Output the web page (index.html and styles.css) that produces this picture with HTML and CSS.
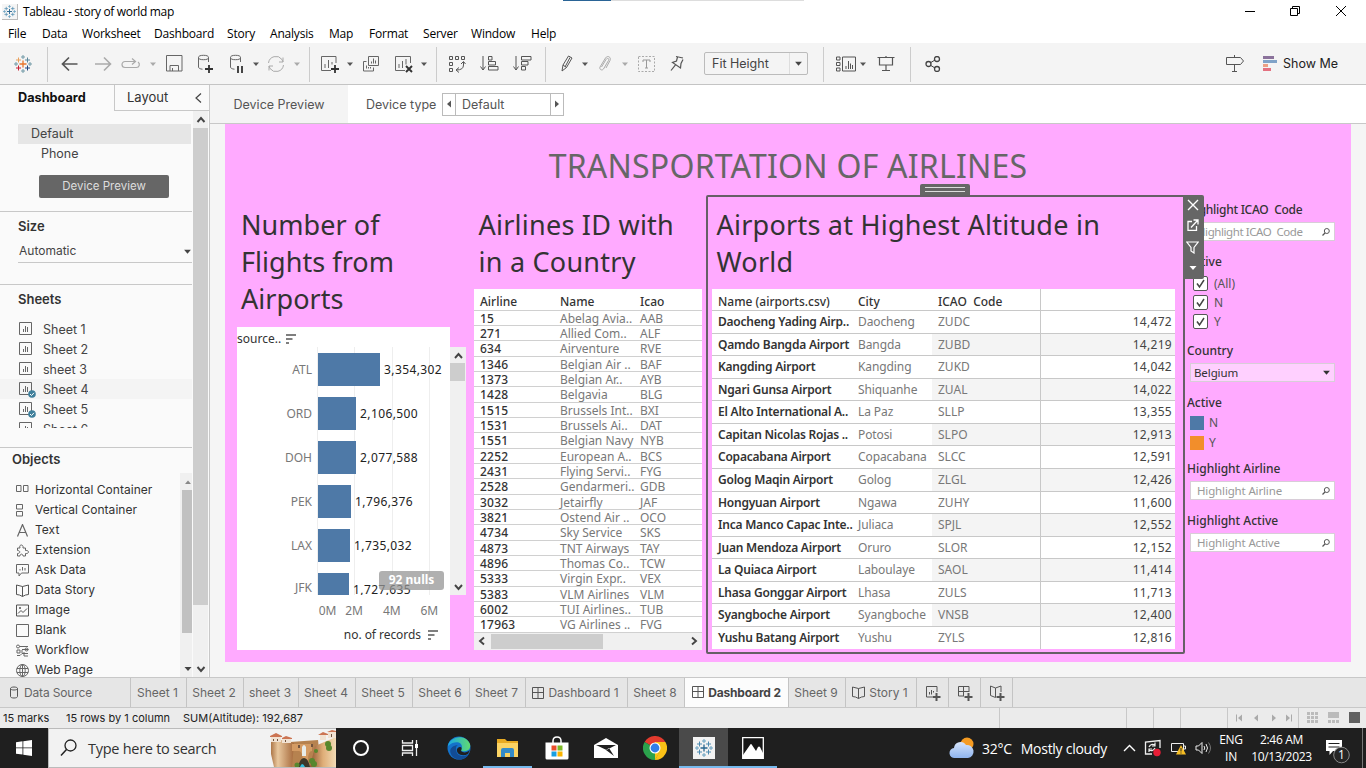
FILE: index.html
```html
<!DOCTYPE html>
<html lang="en">
<head>
<meta charset="utf-8">
<title>Tableau - story of world map</title>
<link rel="stylesheet" href="styles.css">
</head>
<body>
<svg class="defs" width="0" height="0">
  <defs>
    <symbol id="caret" viewBox="0 0 8 8"><path d="M1 2.500h6L4 6z" fill="currentColor"/></symbol>
    <symbol id="chev-up" viewBox="0 0 10 10"><path d="M1.500 7 5 3l3.500 4" fill="none" stroke="currentColor" stroke-width="1.900"/></symbol>
    <symbol id="chev-down" viewBox="0 0 10 10"><path d="M1.500 3 5 7l3.500-4" fill="none" stroke="currentColor" stroke-width="1.900"/></symbol>
    <symbol id="sort" viewBox="0 0 12 12"><path d="M1 2h10M1 6h6.500M1 10h3" stroke="#555" stroke-width="1.700" fill="none"/></symbol>
    <symbol id="sheet" viewBox="0 0 14 14"><path d="M.5.500h12v12H.500zM4.500 10V7M6.500 10V4M8.500 10V5" fill="none" stroke="#666"/></symbol>
    <symbol id="check-badge" viewBox="0 0 8 8"><circle cx="4" cy="4" r="3.800" fill="#3f7f9b"/><path d="m2 4 1.500 1.500L6 2.800" fill="none" stroke="#fff"/></symbol>
    <symbol id="dash" viewBox="0 0 12 12"><path d="M.5.500h11v11H.500zM6 .500v11M.5 5.500h11" fill="none" stroke="#555"/></symbol>
    <symbol id="book" viewBox="0 0 13 13"><path d="M6.500 2.500 .5 1v9.500l3 .5 3 1.500 3-1.500 3-.5V1zM6.500 2.500v10" fill="none" stroke="#555"/></symbol>
    <symbol id="mag" viewBox="0 0 10 10"><circle cx="5.800" cy="4" r="2.500" fill="none" stroke="#555"/><path d="M4 6 1.500 8.500" stroke="#555" stroke-width="1.200"/></symbol>
    <symbol id="dbicon" viewBox="0 0 14 18"><ellipse cx="6.500" cy="3.500" rx="5" ry="2.200" fill="none" stroke="#666"/><path d="M1.500 3.500V13c0 1.200 1.500 2 4 2.200M11.500 3.500V8" fill="none" stroke="#666"/></symbol>
    <symbol id="tabmark" viewBox="0 0 18 18"><path fill="none" stroke-width="1.300" stroke="var(--c1)" d="M9 5.500v7M5.500 9h7"/><path fill="none" stroke="var(--c2)" d="M4.500 2.500v5M2 5h5"/><path fill="none" stroke="var(--c3)" d="M13.500 2.500v5M11 5h5"/><path fill="none" stroke="var(--c4)" d="M4.500 10.500v5M2 13h5"/><path fill="none" stroke="var(--c5)" d="M13.500 10.500v5M11 13h5"/><path fill="none" stroke="var(--c6)" d="M9 0v4M7 2h4M9 14v4M7 16h4M2 7v4M0 9h4M16 7v4M14 9h4"/></symbol>
  </defs>
</svg>

<header class="titlebar">
  <svg class="app-icon mono" width="16" height="16"><use href="#tabmark"/></svg>
  <span class="app-title">Tableau - story of world map</span>
  <div class="progress"><i></i></div>
  <svg class="win-min" width="12" height="12"><path d="M1 6.500h10" stroke="#000"/></svg>
  <svg class="win-max" width="12" height="12"><path d="M1.500 3.500h7v7h-7zM3.500 3.500v-2h7v7h-2" fill="none" stroke="#000"/></svg>
  <svg class="win-close" width="12" height="12"><path d="m1 1 10 10M11 1 1 11" stroke="#000"/></svg>
</header>

<nav class="menubar">
  <span style="width:34px">File</span><span style="width:40px">Data</span><span style="width:72px">Worksheet</span><span style="width:73px">Dashboard</span><span style="width:43px">Story</span><span style="width:59px">Analysis</span><span style="width:40px">Map</span><span style="width:54px">Format</span><span style="width:48px">Server</span><span style="width:60px">Window</span><span>Help</span>
</nav>

<div class="toolbar">
  <div class="t w46"><svg class="colour" width="18" height="18"><use href="#tabmark"/></svg></div>
  <div class="sep w2"></div>
  <div class="t w42 right"><svg width="18" height="16"><path d="M16.500 8H2M8 1.500 1.500 8 8 14.500" fill="none" stroke="#555" stroke-width="1.700"/></svg></div>
  <div class="t w26"><svg width="18" height="16"><path d="M1 8h15M10 1.500 16.500 8 10 14.500" fill="none" stroke="#aaa" stroke-width="1.600"/></svg></div>
  <div class="t w30"><svg width="20" height="14"><path d="M9 4.500H4a3 3 0 0 0 0 6h11.500a3 3 0 0 0 1.500-5.500M8 4.500h6M11 1.500l3.500 3L11 7.500" fill="none" stroke="#aaa" stroke-width="1.200"/></svg></div>
  <div class="t w14 dim"><svg width="8" height="8"><use href="#caret"/></svg></div>
  <div class="t w28"><svg width="17" height="17"><path d="M.5.500h15.500v15.500H.500zM4 16v-5.500h8.500V16M6.500 16v-3" fill="none" stroke="#666"/></svg></div>
  <div class="t w35"><svg width="16" height="20"><g transform="translate(-1 0)"><use href="#dbicon" width="14" height="18"/></g><path d="M11 11v8M7 15h8" stroke="#333" stroke-width="1.800"/></svg></div>
  <div class="t w27"><svg width="16" height="20"><use href="#dbicon" width="14" height="18"/><path d="M9 12v7M13 12v7" stroke="#333" stroke-width="1.800"/></svg></div>
  <div class="t w12"><svg width="8" height="8"><use href="#caret"/></svg></div>
  <div class="t w28"><svg width="18" height="18"><path d="M1.500 8A7.500 7.500 0 0 1 15 4.500L16 7M16 2.500V7h-4M16.500 10A7.500 7.500 0 0 1 3 13.500L2 11M2 15.500V11h4" fill="none" stroke="#aaa"/></svg></div>
  <div class="t w14 dim"><svg width="8" height="8"><use href="#caret"/></svg></div>
  <div class="sep w10"></div>
  <div class="t w32"><svg width="20" height="18"><path d="M16 8V1.500H1.500v14H11M5 13V9M8.500 13V5M12 9.500V7" fill="none" stroke="#666"/><path d="M15 10v8M11 14h8" stroke="#333" stroke-width="1.800"/></svg></div>
  <div class="t w8"><svg width="8" height="8"><use href="#caret"/></svg></div>
  <div class="t w34"><svg width="18" height="18"><path d="M6.500 1.500h10v9h-10zM4.500 6.500h-3v9.500h10v-3.500M9.500 8.500v-2M11.500 8.500v-5M13.500 8.500v-3M4.500 13.500v-3M6.500 13.500v-1.500M8.500 13.500v-1.500" fill="none" stroke="#666"/></svg></div>
  <div class="t w32"><svg width="20" height="18"><path d="M16.500 8V1.500h-15v14H11M5 13V9M8.500 13V6M12 9.500V4" fill="none" stroke="#666"/><path d="m12 11 6 6M18 11l-6 6" stroke="#333" stroke-width="1.900"/></svg></div>
  <div class="t w8"><svg width="8" height="8"><use href="#caret"/></svg></div>
  <div class="sep w16"></div>
  <div class="t w26"><svg width="18" height="18"><path d="M1.500 1.500h3v3h-3zM7.500 1.500h3v3h-3zM13.500 1.500h3v3h-3zM1.500 7.500h3v3h-3zM1.500 13.500h3v3h-3zM15.500 7v3q0 5-7 5M13 9l2.500-2.500L17.500 9M11 12.500 8 15l3 2.500" fill="none" stroke="#555"/></svg></div>
  <div class="t w38"><svg width="19" height="17"><path d="M3 1v14M.5 11.500 3 15l2.500-3.500M8.500 1.500h3.500v3.500H8.500zM8.500 6.500h7v3.500H8.500zM8.500 11.500h9.500v3.500H8.500z" fill="none" stroke="#555"/></svg></div>
  <div class="t w28"><svg width="19" height="17"><path d="M3 1v14M.5 11.500 3 15l2.500-3.500M8.500 1.500h9.500v3.500H8.500zM8.500 6.500h6.500v3.500H8.500zM8.500 11.500h4v3.500h-4z" fill="none" stroke="#555"/></svg></div>
  <div class="sep w18"></div>
  <div class="t w26"><svg width="14" height="18"><path d="m3 10 5.500-9 3.500 2-5.500 9.500-4.500 3.500zM3 10l3.500 2.500M5 12l5-9.500" fill="none" stroke="#555"/></svg></div>
  <div class="t w10"><svg width="8" height="8"><use href="#caret"/></svg></div>
  <div class="t w30"><svg width="14" height="18"><path d="M3.500 12 8 4.500c1.500-2 3.500-1 2.500 1l-5 8.500c-1.500 2-4.500.5-3.500-2L7.500 3c2-3 6-1 4.500 2.500L8 13" fill="none" stroke="#aaa"/></svg></div>
  <div class="t w10 dim"><svg width="8" height="8"><use href="#caret"/></svg></div>
  <div class="t w34"><svg width="18" height="16"><path d="M.5.500h16v15H.500z" fill="none" stroke="#aaa" stroke-dasharray="2 1.500"/><path d="M5 6V4h7v2M8.500 4v8M7 12h3" fill="none" stroke="#999"/></svg></div>
  <div class="t w26"><svg width="14" height="17"><path d="M6 1.500 13 3M7.500 2 6.500 6 2.500 7.500l8 5.500.5-4.500 2-4M5.500 9.800 1 15.500" fill="none" stroke="#555" stroke-width="1.200"/></svg></div>
  <div class="t w132"><div class="select"><span>Fit Height</span><b><svg width="9" height="9"><use href="#caret"/></svg></b></div></div>
  <div class="sep w2"></div>
  <div class="t w34 pad"><svg width="20" height="16"><path d="M.5 1h3.500v3H.500zM.5 6.500h3.500v3H.500zM.5 12h3.500v3H.500zM6.500 1h13v14h-13zM10 13v-3M12.500 13V5M14.500 13V7.500M16.500 13v-4" fill="none" stroke="#555"/></svg></div>
  <div class="t w10"><svg width="8" height="8"><use href="#caret"/></svg></div>
  <div class="t w36"><svg width="18" height="17"><path d="M.5 2.500h17M2.500 2.500v7.500h13V2.500M9 1v1.500M9 10v5.500M5 15.500h8" fill="none" stroke="#555" stroke-width="1.200"/></svg></div>
  <div class="sep w12"></div>
  <div class="t w34"><svg width="16" height="16"><path d="m5 7 5-3M5 9l5 3" stroke="#444"/><g fill="none" stroke="#444" stroke-width="1.300"><circle cx="3.500" cy="8" r="2.500"/><circle cx="12" cy="3" r="2.500"/><circle cx="12" cy="13" r="2.500"/></g></svg></div>
  <div class="grow"></div>
  <div class="t w34"><svg width="20" height="19"><path d="M1.500 3.500h14l3 3.500-3 3.500h-14zM9.500 1v2.500M9.500 10.500v7M7 17.500h5" fill="none" stroke="#555"/></svg></div>
  <div class="showme"><svg width="15" height="16"><path d="M0 1.500h11" stroke="#8b729b" stroke-width="3"/><path d="M0 5.500h14" stroke="#80a3c8" stroke-width="3"/><path d="M0 9.500h5" stroke="#eba084" stroke-width="3"/><path d="M0 13.500h8" stroke="#e47180" stroke-width="3"/></svg>Show Me</div>
</div>

<div class="workspace">
  <aside class="sidebar">
    <div class="side-tabs"><b>Dashboard</b><span>Layout<svg width="8" height="12"><path d="M7 1.500 2 6l5 4.500" fill="none" stroke="#444" stroke-width="1.200"/></svg></span></div>
    <div class="side-body">
      <div class="side-main">
        <section class="devices">
          <div class="dev on">Default</div><div class="dev phone">Phone</div>
          <button class="preview">Device Preview</button>
        </section>
        <section class="size"><h3>Size</h3><div class="auto">Automatic<svg width="9" height="9"><use href="#caret"/></svg></div></section>
        <section class="sheets"><h3>Sheets</h3>
          <div class="sheet-list">
            <div><i><svg width="14" height="14"><use href="#sheet"/></svg></i>Sheet 1</div>
            <div><i><svg width="14" height="14"><use href="#sheet"/></svg></i>Sheet 2</div>
            <div><i><svg width="14" height="14"><use href="#sheet"/></svg></i>sheet 3</div>
            <div class="hot"><i><svg width="14" height="14"><use href="#sheet"/></svg><svg class="badge" width="8" height="8"><use href="#check-badge"/></svg></i>Sheet 4</div>
            <div><i><svg width="14" height="14"><use href="#sheet"/></svg><svg class="badge" width="8" height="8"><use href="#check-badge"/></svg></i>Sheet 5</div>
            <div><i><svg width="14" height="14"><use href="#sheet"/></svg></i>Sheet 6</div>
          </div>
        </section>
        <section class="objects">
          <div class="obj-col"><h3>Objects</h3>
          <div class="obj-list">
            <div><svg width="13" height="13"><path d="M.5 1.500h4.500v6H.500zM7.500 1.500H12v6H7.500z" fill="none" stroke="#666"/></svg>Horizontal Container</div>
            <div><svg width="13" height="13"><path d="M.5.500h6v4.500h-6zM.5 7.500h6V12h-6z" fill="none" stroke="#666"/></svg>Vertical Container</div>
            <div><svg width="13" height="13"><path d="M1.500 12.500 6.500.500l5 12M3 8.500h7" fill="none" stroke="#666" stroke-width="1.200"/></svg>Text</div>
            <div><svg width="13" height="13"><path d="M1.500 12V9.500c3 0 3-3 0-3V4H4C2.500 0 8 0 7 4h2.500v2.500c4-.5 4 3.500 0 3V12H7c0-2.500-3-2.500-3 0z" fill="none" stroke="#666"/></svg>Extension</div>
            <div><svg width="13" height="13"><path d="M.5.500h12v8.500H5.500L3 12V9H.500zM4 6.500V5M6.500 6.500V3M9 6.500V4" fill="none" stroke="#666"/></svg>Ask Data</div>
            <div><svg width="13" height="13"><use href="#book"/></svg>Data Story</div>
            <div><svg width="13" height="13"><path d="M.5 1h12v11H.500zM2 9.500l3-3 2 2 4-4" fill="none" stroke="#555"/><circle cx="4" cy="4" r="1" fill="#555"/></svg>Image</div>
            <div><svg width="13" height="13"><path d="M.5.500h12v12H.500z" fill="none" stroke="#666"/></svg>Blank</div>
            <div><svg width="13" height="13"><g fill="none" stroke="#666"><circle cx="2" cy="2.500" r="1.500"/><path d="M3.500 2.500H12M6 5.500h6.500M1 6h3v3H1zM6 9V6M1 11.500h3l2-2h6M8 8v4h4"/><circle cx="10.500" cy="5.500" r="1.500"/></g></svg>Workflow</div>
            <div><svg width="13" height="13"><g fill="none" stroke="#666"><circle cx="6.500" cy="6.500" r="6"/><ellipse cx="6.500" cy="6.500" rx="2.700" ry="6"/><path d="M1 4.500h11M1 8.500h11M6.500 0v13"/></g></svg>Web Page</div>
          </div></div>
          <div class="obj-scroll"><svg width="8" height="8"><path d="M1 6h6L4 2.500z" fill="#888"/></svg><i></i><svg width="8" height="8"><path d="M.5 2h7L4 6z" fill="#444"/></svg></div>
        </section>
      </div>
      <div class="side-scroll"><svg width="10" height="10"><use href="#chev-up"/></svg><i></i><svg width="10" height="10"><use href="#chev-down"/></svg></div>
    </div>
  </aside>

  <main class="main">
    <div class="device-bar">
      <div class="dp">Device Preview</div><span class="dt">Device type</span>
      <div class="stepper"><i><svg width="6" height="8"><path d="M5 .500v7L1 4z" fill="#555"/></svg></i><span>Default</span><i><svg width="6" height="8"><path d="M1 .500v7L5 4z" fill="#555"/></svg></i></div>
    </div>
    <div class="canvas">
      <div class="dashboard">
        <h1>TRANSPORTATION OF AIRLINES</h1>
        <div class="cols">
          <section class="col-chart">
            <h2>Number of<br>Flights from<br>Airports</h2>
            <div class="chart">
              <div class="panel">
                <div class="field">source..<svg width="12" height="12"><use href="#sort"/></svg></div>
                <div class="bars">
                  <div class="bar"><label>ATL</label><i style="width:62px"></i><span>3,354,302</span></div>
                  <div class="bar"><label>ORD</label><i style="width:38px"></i><span>2,106,500</span></div>
                  <div class="bar"><label>DOH</label><i style="width:38px"></i><span>2,077,588</span></div>
                  <div class="bar"><label>PEK</label><i style="width:33px"></i><span>1,796,376</span></div>
                  <div class="bar"><label>LAX</label><i style="width:32px"></i><span>1,735,032</span></div>
                  <div class="bar last"><label>JFK</label><i style="width:31px"></i><span>1,727,635</span></div>
                </div>
                <div class="axis"><span>0M</span><span>2M</span><span>4M</span><span>6M</span></div>
                <div class="axis-title">no. of records<svg width="12" height="12"><use href="#sort"/></svg></div>
                <div class="nulls">92 nulls</div>
              </div>
              <div class="vscroll"><svg width="11" height="10"><use href="#chev-up"/></svg><i></i><svg width="11" height="10"><use href="#chev-down"/></svg></div>
            </div>
          </section>

          <section class="col-lines">
            <h2>Airlines ID with<br>in a Country</h2>
            <div class="lines">
              <div class="lh"><b>Airline</b><b>Name</b><b>Icao</b></div>
              <div class="lr"><b>15</b><span>Abelag Avia..</span><span>AAB</span></div>
              <div class="lr"><b>271</b><span>Allied Com..</span><span>ALF</span></div>
              <div class="lr"><b>634</b><span>Airventure</span><span>RVE</span></div>
              <div class="lr"><b>1346</b><span>Belgian Air ..</span><span>BAF</span></div>
              <div class="lr"><b>1373</b><span>Belgian Ar..</span><span>AYB</span></div>
              <div class="lr"><b>1428</b><span>Belgavia</span><span>BLG</span></div>
              <div class="lr"><b>1515</b><span>Brussels Int..</span><span>BXI</span></div>
              <div class="lr"><b>1531</b><span>Brussels Ai..</span><span>DAT</span></div>
              <div class="lr"><b>1551</b><span>Belgian Navy</span><span>NYB</span></div>
              <div class="lr"><b>2252</b><span>European A..</span><span>BCS</span></div>
              <div class="lr"><b>2431</b><span>Flying Servi..</span><span>FYG</span></div>
              <div class="lr"><b>2528</b><span>Gendarmeri..</span><span>GDB</span></div>
              <div class="lr"><b>3032</b><span>Jetairfly</span><span>JAF</span></div>
              <div class="lr"><b>3821</b><span>Ostend Air ..</span><span>OCO</span></div>
              <div class="lr"><b>4734</b><span>Sky Service</span><span>SKS</span></div>
              <div class="lr"><b>4873</b><span>TNT Airways</span><span>TAY</span></div>
              <div class="lr"><b>4896</b><span>Thomas Co..</span><span>TCW</span></div>
              <div class="lr"><b>5333</b><span>Virgin Expr..</span><span>VEX</span></div>
              <div class="lr"><b>5383</b><span>VLM Airlines</span><span>VLM</span></div>
              <div class="lr"><b>6002</b><span>TUI Airlines..</span><span>TUB</span></div>
              <div class="lr"><b>17963</b><span>VG Airlines ..</span><span>FVG</span></div>
              <div class="hscroll"><svg width="10" height="10"><path d="M7 1.500 3 5l4 3.500" fill="none" stroke="#444" stroke-width="1.900"/></svg><i></i><svg width="10" height="10"><path d="M3 1.500 7 5 3 8.500" fill="none" stroke="#444" stroke-width="1.900"/></svg></div>
            </div>
          </section>

          <section class="col-ports">
            <div class="grip"></div>
            <div class="tools">
              <svg width="12" height="12"><path d="m1 1 10 10M11 1 1 11" stroke="#fff" stroke-width="1.400"/></svg>
              <svg width="12" height="12"><path d="M5 2.500H1v9h8.500V7M4 8.500 10.500 1.500M6.500 1h4.500v4.500" fill="none" stroke="#fff" stroke-width="1.300"/></svg>
              <svg width="13" height="13"><path d="M.8 1h11.400L8 6.500V12L5 10V6.500z" fill="none" stroke="#fff" stroke-width="1.200"/></svg>
              <svg width="8" height="6"><path d="M.5 1h7L4 5z" fill="#fff"/></svg>
            </div>
            <h2>Airports at Highest Altitude in<br>World</h2>
            <div class="ports">
              <div class="ph"><b>Name (airports.csv)</b><b>City</b><b>ICAO&nbsp; Code</b><em></em></div>
              <div class="pr"><b>Daocheng Yading Airp..</b><span>Daocheng</span><span>ZUDC</span><em>14,472</em></div>
              <div class="pr"><b>Qamdo Bangda Airport</b><span>Bangda</span><span>ZUBD</span><em>14,219</em></div>
              <div class="pr"><b>Kangding Airport</b><span>Kangding</span><span>ZUKD</span><em>14,042</em></div>
              <div class="pr"><b>Ngari Gunsa Airport</b><span>Shiquanhe</span><span>ZUAL</span><em>14,022</em></div>
              <div class="pr"><b>El Alto International A..</b><span>La Paz</span><span>SLLP</span><em>13,355</em></div>
              <div class="pr"><b>Capitan Nicolas Rojas ..</b><span>Potosi</span><span>SLPO</span><em>12,913</em></div>
              <div class="pr"><b>Copacabana Airport</b><span>Copacabana</span><span>SLCC</span><em>12,591</em></div>
              <div class="pr"><b>Golog Maqin Airport</b><span>Golog</span><span>ZLGL</span><em>12,426</em></div>
              <div class="pr"><b>Hongyuan Airport</b><span>Ngawa</span><span>ZUHY</span><em>11,600</em></div>
              <div class="pr"><b>Inca Manco Capac Inte..</b><span>Juliaca</span><span>SPJL</span><em>12,552</em></div>
              <div class="pr"><b>Juan Mendoza Airport</b><span>Oruro</span><span>SLOR</span><em>12,152</em></div>
              <div class="pr"><b>La Quiaca Airport</b><span>Laboulaye</span><span>SAOL</span><em>11,414</em></div>
              <div class="pr"><b>Lhasa Gonggar Airport</b><span>Lhasa</span><span>ZULS</span><em>11,713</em></div>
              <div class="pr"><b>Syangboche Airport</b><span>Syangboche</span><span>VNSB</span><em>12,400</em></div>
              <div class="pr"><b>Yushu Batang Airport</b><span>Yushu</span><span>ZYLS</span><em>12,816</em></div>
            </div>
          </section>

          <section class="filters">
            <h4 class="icao">Highlight ICAO&nbsp; Code</h4>
            <div class="search icao"><span>Highlight ICAO&nbsp; Code</span><svg width="10" height="10"><use href="#mag"/></svg></div>
            <h4 class="g1">Active</h4>
            <div class="cb"><i><svg width="11" height="11"><path d="m2 5.500 2.500 3.500L9 2" fill="none" stroke="#444" stroke-width="1.500"/></svg></i>(All)</div>
            <div class="cb"><i><svg width="11" height="11"><path d="m2 5.500 2.500 3.500L9 2" fill="none" stroke="#444" stroke-width="1.500"/></svg></i>N</div>
            <div class="cb"><i><svg width="11" height="11"><path d="m2 5.500 2.500 3.500L9 2" fill="none" stroke="#444" stroke-width="1.500"/></svg></i>Y</div>
            <h4 class="g2">Country</h4>
            <div class="search country"><span>Belgium</span><svg width="9" height="9"><use href="#caret"/></svg></div>
            <h4 class="g3">Active</h4>
            <div class="lg"><i></i>N</div><div class="lg y"><i></i>Y</div>
            <h4 class="g4">Highlight Airline</h4>
            <div class="search"><span>Highlight Airline</span><svg width="10" height="10"><use href="#mag"/></svg></div>
            <h4 class="g3">Highlight Active</h4>
            <div class="search"><span>Highlight Active</span><svg width="10" height="10"><use href="#mag"/></svg></div>
          </section>
        </div>
      </div>
    </div>
  </main>
</div>

<div class="tabs">
  <div class="ds" style="width:131px"><svg width="10" height="13"><path d="M1.500 2.500v8c0 2 7 2 7 0v-8c0-2-7-2-7 0 0 2 7 2 7 0" fill="none" stroke="#555"/></svg>Data Source</div>
  <div style="width:56px">Sheet 1</div><div style="width:57px">Sheet 2</div><div style="width:55px">sheet 3</div><div style="width:57px">Sheet 4</div><div style="width:57px">Sheet 5</div><div style="width:57px">Sheet 6</div><div style="width:56px">Sheet 7</div>
  <div style="width:102px"><svg width="12" height="12"><use href="#dash"/></svg>Dashboard 1</div>
  <div style="width:57px">Sheet 8</div>
  <div class="active" style="width:104px"><svg width="12" height="12"><use href="#dash"/></svg>Dashboard 2</div>
  <div style="width:57px">Sheet 9</div>
  <div style="width:71px"><svg width="13" height="13"><use href="#book"/></svg>Story 1</div>
  <div class="new"><svg width="16" height="16"><path d="M12 7V1.500H1.500V12H7M4.500 9.500V7M6.500 9.500V5M8.500 7.500V6" fill="none" stroke="#555"/><path d="M11.500 8v8M7.500 12h8" stroke="#555" stroke-width="2"/></svg></div>
  <div class="new"><svg width="16" height="16"><path d="M12 7V1.500H1.500V11H7M1.500 6.500H12M6.500 1.500V11" fill="none" stroke="#555"/><path d="M11.500 8v8M7.500 12h8" stroke="#555" stroke-width="2"/></svg></div>
  <div class="new"><svg width="16" height="16"><path d="M12 7V1L6.500 3 1.500 1v9.500l5 2M6.500 3v9.500" fill="none" stroke="#555"/><path d="M11.500 8v8M7.500 12h8" stroke="#555" stroke-width="2"/></svg></div>
</div>

<div class="status">
  <span style="width:63px">15 marks</span><span style="width:117px">15 rows by 1 column</span><span style="width:816px">SUM(Altitude): 192,687</span>
  <i style="width:127px"></i><i style="width:27px"></i><i style="width:27px"></i><i style="width:47px"></i>
  <i style="width:71px"><svg width="62" height="8"><g fill="#aaa"><path d="M7 .500v7L3 4zM23 .500v7L19 4zM37 .500v7L41 4zM51 .500v7L55 4z"/><path d="M1 .500h1v7H1zM56 .500h1v7h-1z"/></g></svg></i>
  <i class="views"><svg width="54" height="11"><g fill="#bbb"><path d="M0 0h3v3H0zM4 0h3v3H4zM8 0h3v3H8zM0 4h3v3H0zM4 4h3v3H4zM8 4h3v3H8zM0 8h3v3H0zM4 8h3v3H4zM8 8h3v3H8zM21 0h11v6H21zM21 8h3v3h-3zM25 8h3v3h-3zM29 8h3v3h-3z"/></g><path d="M42 0h11v11H42z" fill="#606060"/></svg></i>
</div>

<footer class="taskbar">
  <div class="start"><svg width="16" height="16"><path d="M0 2.300 6.500 1.300v6.200H0zM7.300 1.200 16 0v7.500H7.300zM0 8.300h6.500v6.300L0 13.700zM7.300 8.300H16V16l-8.700-1.200z" fill="#fff"/></svg></div>
  <div class="find"><svg width="18" height="18"><circle cx="10.500" cy="6.500" r="5.500" fill="none" stroke="#222" stroke-width="1.300"/><path d="M6.500 10.500 1 16.500" stroke="#222" stroke-width="1.500"/></svg><span>Type here to search</span>
    <svg class="scene" width="66" height="38" viewBox="0 0 66 38">
      <defs><linearGradient id="cliff"><stop offset="0" stop-color="#ad7748"/><stop offset=".3" stop-color="#e9c89e"/><stop offset="1" stop-color="#a66a3c"/></linearGradient><linearGradient id="rock"><stop offset="0" stop-color="#8e542f"/><stop offset=".5" stop-color="#dfae78"/><stop offset="1" stop-color="#f2dbb5"/></linearGradient></defs>
      <path d="M20 13 48 11l3 27H20z" fill="#b6824f"/><path d="M1 13 12 11l12 3-2 24H4L1 25z" fill="url(#cliff)"/>
      <path d="m45 17 21-9v30H40z" fill="url(#rock)"/><path d="M22 15h20v7q-4 0-4 9h-5q-1-9-4-9h-7z" fill="#d49b63"/>
      <path d="M32 18q2-4 4 0v9h-4z" fill="#e8ece9"/><path d="M28 38q2-9 6-9t6 9z" fill="#3c382a"/><path d="M30 38q2-6 5 0z" fill="#35bfe0"/>
      <path d="M1 8h10v5H1zM12 9h9v5h-9zM50 5h6v6h-6zM58 3h8v6h-8z" fill="#f1e2d2"/><path d="m0 7 6-3 6 3v1H0zM12 9l4-2 6 2v1H12zM48 6l5-3 5 2v1zM57 3l5-2 4 1v1z" fill="#cc7553"/>
      <path d="M3 10h1v2H3zM7 10h1v2H7zM15 11h1v2h-1zM61 5h1v3h-1zM28 16h2v3h-2zM41 15h2v3h-2z" fill="#72543f"/>
      <g fill="#57872e"><circle cx="46" cy="22" r="2"/><circle cx="58" cy="15" r="3"/><circle cx="59" cy="19" r="3"/><circle cx="42" cy="32" r="3"/><circle cx="44" cy="35" r="3"/><circle cx="27" cy="36" r="2.500"/></g>
    </svg></div>
  <div class="app"><svg width="18" height="18"><circle cx="9" cy="9" r="7" fill="none" stroke="#fff" stroke-width="2"/></svg></div>
  <div class="app"><svg width="18" height="16"><path d="M1.500 0v3h10V0M1.500 5.500h10v5h-10zM1.500 16v-3h10v3M15.500 0v16" fill="none" stroke="#eee" stroke-width="1.300"/><path d="M14 4h3v4h-3z" fill="#fff"/></svg></div>
  <div class="app"><svg width="24" height="24"><defs><linearGradient id="eg"><stop stop-color="#18a7e7"/><stop offset="1" stop-color="#60da70"/></linearGradient></defs><circle cx="12" cy="12" r="11.500" fill="#1472ca"/><path d="M1 10C2 1 18-3 23 8c1 5-2 8-8 7-3-1 0-2 0-4 0-5-7-7-14-1z" fill="url(#eg)"/><path d="M9 13c0 7 7 9 13 5-4 7-13 7-17 2-4-6-1-10 6-11-2 1-2 2-2 4z" fill="#124c95"/><path d="M13 11c2 0 2 2 1 4 2 2 6 2 9-1l-2 4c-6 3-12 0-11-5 1-1 1-2 3-2z" fill="#1f1f1f"/></svg></div>
  <div class="app open"><svg width="22" height="20"><path d="M0 1h8l2 2h11v16H0z" fill="#e7aa23"/><path d="M0 5h21v14H0z" fill="#fbd364"/><path d="M4 19v-7q0-2 2-2h9q2 0 2 2v7h-4v-4H8v4z" fill="#348bc9"/></svg></div>
  <div class="app"><svg width="24" height="24"><path d="M8 7V5q0-4 4-4t4 4v2" fill="none" stroke="#fff" stroke-width="1.500"/><path d="M.5 6.500h23V22q0 1.500-1.500 1.500H2Q.5 23.500.5 22z" fill="#fff"/><path d="M6.500 9.500h5v5h-5z" fill="#e94e2c"/><path d="M12.500 9.500h5v5h-5z" fill="#7cb825"/><path d="M6.500 15.500h5v5h-5z" fill="#199fe1"/><path d="M12.500 15.500h5v5h-5z" fill="#fbb400"/></svg></div>
  <div class="app"><svg width="24" height="20"><path d="M0 7 12 0l12 7v13H0z" fill="#fff"/><path d="M2 7h20l-9.500 5zM12 12l8 6-5-8z" fill="#1f1f1f"/></svg></div>
  <div class="app"><svg width="24" height="24" viewBox="0 0 24 24"><path d="M12 12 1.600 6A12 12 0 0 1 22.400 6z" fill="#e33b2e"/><path d="M12 12 1.600 6A12 12 0 0 0 12 24l5-9z" fill="#2ba24c"/><path d="M12 12v12A12 12 0 0 0 22.400 6H12z" fill="#fbc116"/><path d="m12 24 5-9-5-2-5 2z" fill="#2ba24c"/><path d="m12 24 5.200-9H12z" fill="#fbc116"/><circle cx="12" cy="12" r="5.500" fill="#fff"/><circle cx="12" cy="12" r="4.400" fill="#327ee8"/></svg></div>
  <div class="app open sel"><svg class="tile mono" width="22" height="22" viewBox="-2 -2 22 22"><use href="#tabmark" width="18" height="18"/></svg></div>
  <div class="app open"><svg width="22" height="22"><path d="M.7.700h20.600v20.600H.700z" fill="#161616" stroke="#fff" stroke-width="1.300"/><path d="m1 18 7-10q1-2 2 0l4 6 2-4q1-1 2 0l3 6v5H1z" fill="#fff"/></svg></div>
  <div class="grow"></div>
  <div class="weather"><svg width="26" height="22"><defs><linearGradient id="cl" x2="0" y2="1"><stop stop-color="#d7e5fb"/><stop offset="1" stop-color="#8fb4ee"/></linearGradient></defs><circle cx="18" cy="7" r="6.500" fill="#f59b22"/><path d="M6 21a5 5 0 0 1-1-10 6.500 6.500 0 0 1 12-3 5.500 5.500 0 0 1 2 13z" fill="url(#cl)"/></svg><span class="temp">32°C</span><span>Mostly cloudy</span></div>
  <div class="tray">
    <svg width="13" height="8"><path d="M1 7 6.500 1.500 12 7" fill="none" stroke="#fff" stroke-width="1.400"/></svg>
    <svg width="18" height="18"><path d="M8 15H1.500V3L16 1.500V9" fill="none" stroke="#eee" stroke-width="1.300"/><path d="M5 8q2-4 6-2M11 3.500V7H8M11 9q-2 4-6 2M5 13v-3h3" fill="none" stroke="#eee" stroke-width="1.200"/><circle cx="13" cy="13.500" r="3.700" fill="#e71d36"/></svg>
    <svg width="17" height="16"><path d="M1.500 3.500h12v8h-12zM14 6h1.500v3H14" fill="none" stroke="#eee"/><path d="m11 5 5 9.500H6z" fill="#f6bd24"/><path d="M11 8v3.500M11 12.500v1" stroke="#222"/></svg>
    <svg width="17" height="16"><path d="M1 6h2.500L7 2.500v11L3.500 10H1zM9 6q1.500 2 0 4M11 4q3 4 0 8" fill="none" stroke="#eee"/><path d="M13.500 2.500q4 5.500 0 11" fill="none" stroke="#777"/></svg>
  </div>
  <div class="lang">ENG<br>IN</div><div class="clock">2:46 AM<br>10/13/2023</div>
  <div class="note"><svg width="26" height="26"><path d="M1 1h16v11H8l-3.500 4v-4H1z" fill="#fff"/><path d="M3.500 4.500h11M3.500 8h11" stroke="#1f1f1f"/><circle cx="16.500" cy="16" r="7.800" fill="#262626" stroke="#888"/></svg><b>1</b></div>
</footer>
</body>
</html>
```

FILE: styles.css
```css
* { box-sizing: border-box; }
body { margin: 0; width: 1366px; height: 768px; overflow: hidden; display: flex; flex-direction: column; background: #fff; font-family: Inter, "Liberation Sans", sans-serif; font-size: 13px; color: #333; }
svg { display: block; flex: none; }
.defs { position: absolute; }
.grow { flex: 1; }
h1, h2, h3, h4 { margin: 0; font-weight: 400; }
i, em { font-style: normal; }
.mono { --c1: #27658f; --c2: #4d8ab0; --c3: #4d8ab0; --c4: #4d8ab0; --c5: #4d8ab0; --c6: #67a0c0; }
.colour { --c1: #e8762c; --c2: #e8a05c; --c3: #5b879b; --c4: #c72035; --c5: #1f447e; --c6: #7099a6; }

/* title bar and menu */
.titlebar { height: 24px; display: flex; align-items: center; padding-left: 2px; font: 12px/22px "Open Sans", sans-serif; color: #000; flex: none; }
.app-icon { border-right: 1px solid #bbb; border-bottom: 1px solid #bbb; padding: 1px; background: #f5f5f5; }
.app-title { width: 541px; padding-left: 5px; letter-spacing: -.33px; }
.progress { width: 241px; height: 1px; background: #ddd; align-self: flex-start; flex: none; margin-left: 4px; }
.progress i { display: block; width: 48px; height: 1px; background: #2a6496; }
.win-min { margin-left: 440px; margin-bottom: 3px; }
.win-max { margin-left: 33px; margin-bottom: 3px; }
.win-close { margin-left: 34px; margin-bottom: 3px; }
.menubar { height: 19px; padding-left: 8px; display: flex; font: 12px/20px "Open Sans", sans-serif; letter-spacing: -.2px; color: #000; flex: none; }

/* toolbar */
.toolbar { height: 42px; flex: none; background: #f4f4f4; border-bottom: 1px solid #c4c4c4; display: flex; color: #555; }
.t { display: flex; align-items: center; justify-content: center; flex: none; }
.t.right { justify-content: flex-end; padding-right: 11px; }
.t.pad { padding-left: 10px; }
.t.dim { color: #aaa; }
.sep { display: flex; justify-content: center; padding: 4px 0 2px; flex: none; }
.sep::before { content: ""; width: 1px; background: #ccc; }
.w2 { width: 2px; } .w8 { width: 8px; } .w10 { width: 10px; } .w12 { width: 12px; } .w14 { width: 14px; } .w16 { width: 16px; } .w18 { width: 18px; }
.w26 { width: 26px; } .w27 { width: 27px; } .w28 { width: 28px; } .w30 { width: 30px; } .w32 { width: 32px; } .w34 { width: 34px; }
.w35 { width: 35px; } .w36 { width: 36px; } .w38 { width: 38px; } .w42 { width: 42px; } .w46 { width: 46px; } .w132 { width: 132px; }
.select { width: 104px; height: 23px; border: 1px solid #bbb; border-radius: 2px; display: flex; line-height: 21px; font-size: 12.500px; color: #444; }
.select span { width: 85px; padding-left: 7px; border-right: 1px solid #ddd; }
.select b { flex: 1; display: grid; place-items: center; }
.showme { width: 114px; padding-left: 11px; display: flex; align-items: center; gap: 5px; color: #222; font-size: 12.500px; }

/* workspace */
.workspace { flex: 1; display: flex; min-height: 0; }
.sidebar { width: 210px; border-right: 1px solid #c8c8c8; background: #fafafa; display: flex; flex-direction: column; }
.side-tabs { height: 26px; display: flex; flex: none; line-height: 25px; color: #333; font-size: 13px; }
.side-tabs b { width: 114px; padding-left: 18px; color: #111; font-weight: 700; font-size: 12.700px; }
.side-tabs span { flex: 1; border-left: 1px solid #c8c8c8; border-bottom: 1px solid #c8c8c8; padding: 0 7px 0 12px; display: flex; justify-content: space-between; align-items: center; }
.side-body { flex: 1; display: flex; min-height: 0; }
.side-main { width: 192px; flex: none; display: flex; flex-direction: column; margin-right: 1px; min-height: 0; }
.side-scroll { width: 15px; background: #f0f0f0; color: #444; display: flex; flex-direction: column; align-items: center; padding-top: 4px; }
.side-scroll i { width: 15px; height: 477px; background: #cdcdcd; margin: 3px 0 59px; }
.devices { height: 101px; padding: 13px 1px 0 18px; border-bottom: 1px solid #c8c8c8; flex: none; }
.dev { height: 20px; line-height: 19px; color: #444; padding-left: 13px; font-size: 12.500px; }
.dev.on { background: #e6e6e6; }
.dev.phone { padding-left: 23px; line-height: 20px; }
.preview { display: block; margin: 11px 0 0 21px; width: 130px; height: 23px; border: 0; border-radius: 2px; background: #666; color: #ddd; font: 11.500px/21px Inter, sans-serif; padding: 0; }
h3 { font-weight: 600; font-size: 13px; color: #333; line-height: 20px; }
.size { height: 73px; border-bottom: 1px solid #c8c8c8; padding: 4px 1px 0 18px; flex: none; }
.auto { margin-top: 4px; height: 23px; line-height: 22px; font-size: 12px; color: #444; border-bottom: 1px solid #c8c8c8; display: flex; justify-content: space-between; align-items: center; padding: 0 0 0 1px; margin-right: -1px; }
.sheets { height: 163px; border-bottom: 1px solid #c8c8c8; padding-top: 4px; flex: none; }
.sheets h3 { padding-left: 18px; }
.sheet-list { margin-top: 10px; height: 109px; overflow: hidden; }
.sheet-list div { height: 20px; line-height: 21px; display: flex; padding-left: 19px; color: #444; font-size: 12.500px; }
.sheet-list .hot { background: #f4f4f4; }
.sheet-list i { width: 24px; padding-top: 3px; position: relative; }
.badge { position: absolute; left: 9px; top: 11px; }
.objects { flex: 1; display: flex; min-height: 0; overflow: hidden; }
.obj-col { width: 180px; }
.obj-col h3 { padding: 1px 0 0 12px; }
.obj-list { margin-top: 11px; }
.obj-list div { height: 20px; line-height: 20px; font-size: 12px; display: flex; align-items: center; gap: 6px; padding-left: 16px; letter-spacing: .03px; }
.obj-scroll { width: 12px; background: #f0f0f0; margin-top: 25px; display: flex; flex-direction: column; align-items: flex-end; padding-top: 5px; }
.obj-scroll i { width: 10px; height: 143px; background: #c1c1c1; margin: 4px 0 32px; }

.main { flex: 1; display: flex; flex-direction: column; }
.device-bar { height: 39px; background: #fff; border-bottom: 1px solid #c8c8c8; display: flex; align-items: center; color: #555; flex: none; }
.dp { width: 138px; height: 38px; background: #f4f4f4; text-align: center; line-height: 39px; font-size: 12.500px; }
.dt { width: 94px; padding-left: 18px; font-size: 12.500px; }
.stepper { width: 122px; height: 23px; border: 1px solid #bbb; display: flex; line-height: 21px; font-size: 12.500px; }
.stepper i { width: 12px; display: grid; place-items: center; }
.stepper span { flex: 1; border: 1px solid #bbb; border-width: 0 1px; padding-left: 6px; }
.canvas { flex: 1; background: #f5f5f5; padding: 0 15px 15px; display: flex; }

/* dashboard */
.dashboard { flex: 1; background: #ffaaff; font-family: "Noto Sans", sans-serif; font-size: 12px; }
h1 { height: 71px; padding-top: 12px; font-size: 32px; line-height: 60px; letter-spacing: .23px; text-align: center; color: #666; white-space: nowrap; }
h2 { font-size: 27px; line-height: 37px; letter-spacing: .24px; color: #333; white-space: nowrap; }
.cols { display: flex; padding-left: 12px; }
.col-chart { width: 237px; padding-top: 11px; }
.col-chart h2 { padding-left: 4px; height: 121px; letter-spacing: .05px; }
.chart { display: flex; }
.panel { width: 213px; height: 323px; background: #fff; position: relative; }
.field { height: 20px; line-height: 24px; display: flex; align-items: center; gap: 4px; color: #333; padding-top: 3px; }
.bars { height: 248px; padding-top: 6px; overflow: hidden; background: linear-gradient(#eee, #eee) 80px 0/1px 100% no-repeat, linear-gradient(#eee, #eee) 117px 0/1px 100% no-repeat, linear-gradient(#eee, #eee) 155px 0/1px 100% no-repeat, linear-gradient(#eee, #eee) 192px 0/1px 100% no-repeat; }
.bar { height: 33px; margin-bottom: 11px; display: flex; align-items: center; }
.bar label { width: 81px; padding-right: 6px; text-align: right; color: #787878; }
.bar i { height: 100%; background: #4e79a7; }
.bar span { padding-left: 4px; color: #222; letter-spacing: .4px; }
.bar.last { align-items: flex-start; line-height: 29px; }
.bar.last span { line-height: 34px; }
.axis { display: flex; padding-left: 72px; height: 30px; line-height: 31px; color: #787878; }
.axis span { width: 37.500px; text-align: center; }
.axis span:first-child { width: 27px; margin-left: 5px; }
.axis span:nth-child(2) { width: 26px; margin-right: 6px; }
.axis-title { display: flex; justify-content: flex-end; align-items: center; gap: 6px; padding-right: 11px; height: 19px; color: #333; letter-spacing: -.05px; }
.nulls { position: absolute; left: 142px; top: 244px; width: 65px; height: 19px; border-radius: 3px; background: rgba(150,150,150,.75); color: #fff; font-weight: 700; font-size: 12px; line-height: 18px; text-align: center; }
.vscroll { width: 16px; height: 248px; margin-top: 20px; background: #f0f0f0; color: #444; display: flex; flex-direction: column; align-items: center; justify-content: space-between; padding: 4px 0 3px; }
.vscroll i { width: 15px; height: 18px; background: #cdcdcd; margin: 0 1px 199px 0; }

.col-lines { width: 232px; padding-top: 11px; }
.col-lines h2, .col-ports h2 { padding-left: 4.500px; height: 83px; }
.lines { width: 228px; height: 361px; background: #fff; color: #787878; }
.lh, .lr { display: grid; grid-template-columns: 80px 80px 1fr; padding-left: 6px; border-bottom: 1px solid #d0d0d0; }
.lines b { font-weight: 500; color: #333; }
.lh { height: 21.500px; line-height: 25px; }
.lr { height: 15.350px; line-height: 15.500px; white-space: nowrap; }
.lr b { letter-spacing: .2px; }
.hscroll { height: 17px; background: #f0f0f0; display: flex; align-items: center; justify-content: space-between; padding: 0 3px; }
.hscroll i { width: 112px; height: 15px; background: #cdcdcd; margin: 0 83px 0 0; }

.col-ports { width: 479px; height: 459px; border: 2px solid #665f66; border-radius: 2px; padding: 9px 4px 0; position: relative; }
.grip { position: absolute; left: 212px; top: -13px; width: 50px; height: 11px; background: linear-gradient(#ddd, #ddd) center 3px/40px 1px no-repeat, linear-gradient(#ddd, #ddd) center 7px/40px 1px no-repeat, #666; border-radius: 2px 2px 0 0; }
.tools { position: absolute; left: 475px; top: -2px; width: 21px; height: 84px; background: #666; border-radius: 0 2px 2px 0; display: flex; flex-direction: column; align-items: center; padding: 4px 2px 0 0; z-index: 2; }
.tools svg:nth-child(2) { margin-top: 8px; } .tools svg:nth-child(3) { margin-top: 10px; } .tools svg:nth-child(4) { margin-top: 11px; }
.ports { width: 463px; background: #fff; }
.ph, .pr { display: grid; grid-template-columns: 146px 74px 108px 135px; grid-template-rows: 100%; border-bottom: 1px solid #c8c8c8; white-space: nowrap; }
.ph { height: 22px; line-height: 25px; color: #333; }
.ph b { font-weight: 500; padding-left: 6px; }
.ph em, .pr em { border-left: 1px solid #c8c8c8; }
.pr { height: 22.570px; line-height: 22px; color: #787878; }
.pr:last-child { border-bottom: 0; }
.pr b { font-weight: 600; color: #333; padding-left: 6px; letter-spacing: -.22px; }
.ports span { padding-left: 6px; }
.pr b + span { padding-left: 0; letter-spacing: -.1px; }
.ph b + b:not(:nth-child(3)) { padding-left: 0; }
.pr em { text-align: right; padding-right: 3px; color: #444; letter-spacing: .3px; }
.pr:nth-child(odd) span:nth-child(3), .pr:nth-child(odd) em { background-color: #f4f4f4; background-clip: padding-box; }

.filters { width: 150px; padding: 5px 0 0 2px; color: #555; }
h4 { font-size: 12px; font-weight: 500; line-height: 20px; color: #333; }
h4.icao { letter-spacing: -.27px; }
.search { margin: 2px 0 0 3px; width: 145px; height: 19px; border: 1px solid #d8cdd8; background: #fff; color: #999; line-height: 17px; font-size: 11.500px; display: flex; justify-content: space-between; align-items: center; padding: 0 3px 0 6px; letter-spacing: -.15px; }
.search.icao { letter-spacing: -.42px; }
.country { background: #ffd0ff; color: #333; padding: 0 3px; letter-spacing: -.1px; }
.g1 { margin-top: 11px; } .g2 { margin-top: 9px; } .g3 { margin-top: 11px; } .g4 { margin-top: 6px; }
.cb { display: flex; height: 19px; line-height: 18px; padding-left: 6px; gap: 6px; }
.g1 + .cb { margin-top: 3px; }
.cb i { width: 15px; height: 15px; border: 1px solid #555; border-radius: 2px; background: #fff; padding: 1px; margin-top: 1px; }
.lg { display: flex; height: 20px; line-height: 19px; padding-left: 3px; gap: 5px; }
.lg i { width: 14px; height: 14px; background: #4e79a7; margin-top: 3px; }
.lg.y i { background: #f28e2b; }

/* tabs and status */
.tabs { height: 31px; flex: none; background: #e6e6e6; border-top: 1px solid #c8c8c8; border-bottom: 1px solid #c8c8c8; display: flex; font-size: 12px; color: #666; }
.tabs div { border-right: 1px solid #c4c4c4; display: flex; align-items: center; justify-content: center; gap: 4px; white-space: nowrap; flex: none; padding-right: 2px; }
.tabs .ds { justify-content: flex-start; padding-left: 9px; gap: 5px; letter-spacing: -.15px; }
.tabs .active { background: #fcfcfc; font-weight: 700; color: #444; padding: 0 0 1px; letter-spacing: -.15px; }
.tabs .new { width: 32px; padding: 0; }
.status { height: 20px; flex: none; background: #ebebeb; display: flex; padding-left: 3px; line-height: 20px; font-size: 11px; color: #222; white-space: nowrap; }
.status i { border-left: 1px solid #c8c8c8; flex: none; }
.status i svg { margin: 6px 0 0 7px; }
.status .views svg { margin: 4px 0 0 8px; }

/* taskbar */
.taskbar { height: 40px; flex: none; background: #1f1f1f; display: flex; color: #fff; font-family: "Open Sans", sans-serif; }
.start { width: 48px; display: grid; place-items: center; }
.find { width: 288px; background: #f2f2f2; border: 1px solid #bbb; border-right: 0; display: flex; align-items: center; padding-left: 11px; color: #333; font-size: 14.500px; white-space: nowrap; }
.find span { padding-left: 10px; letter-spacing: -.27px; }
.scene { margin-left: auto; align-self: flex-end; }
.app { width: 49px; display: grid; place-items: center; }
.open { box-shadow: inset 0 -2px #76b9ed; }
.sel { background: #4a4a4a; }
.tile { background: #f2f2f2; }
.weather { display: flex; align-items: center; font-size: 14px; width: 174px; white-space: nowrap; letter-spacing: -.27px; }
.temp { padding: 0 9px 0 7px; }
.tray { display: flex; align-items: center; width: 96px; gap: 8px; }
.lang, .clock { text-align: center; font-size: 12px; line-height: 17px; padding-top: 3px; letter-spacing: -.3px; }
.lang { width: 24px; }
.clock { width: 77px; }
.note { width: 43px; padding: 11px 0 0 5px; position: relative; border-right: 1px solid #777; margin-right: 3px; }
.note b { position: absolute; left: 18px; top: 17px; font-size: 12px; line-height: 20px; font-weight: 400; }
```
